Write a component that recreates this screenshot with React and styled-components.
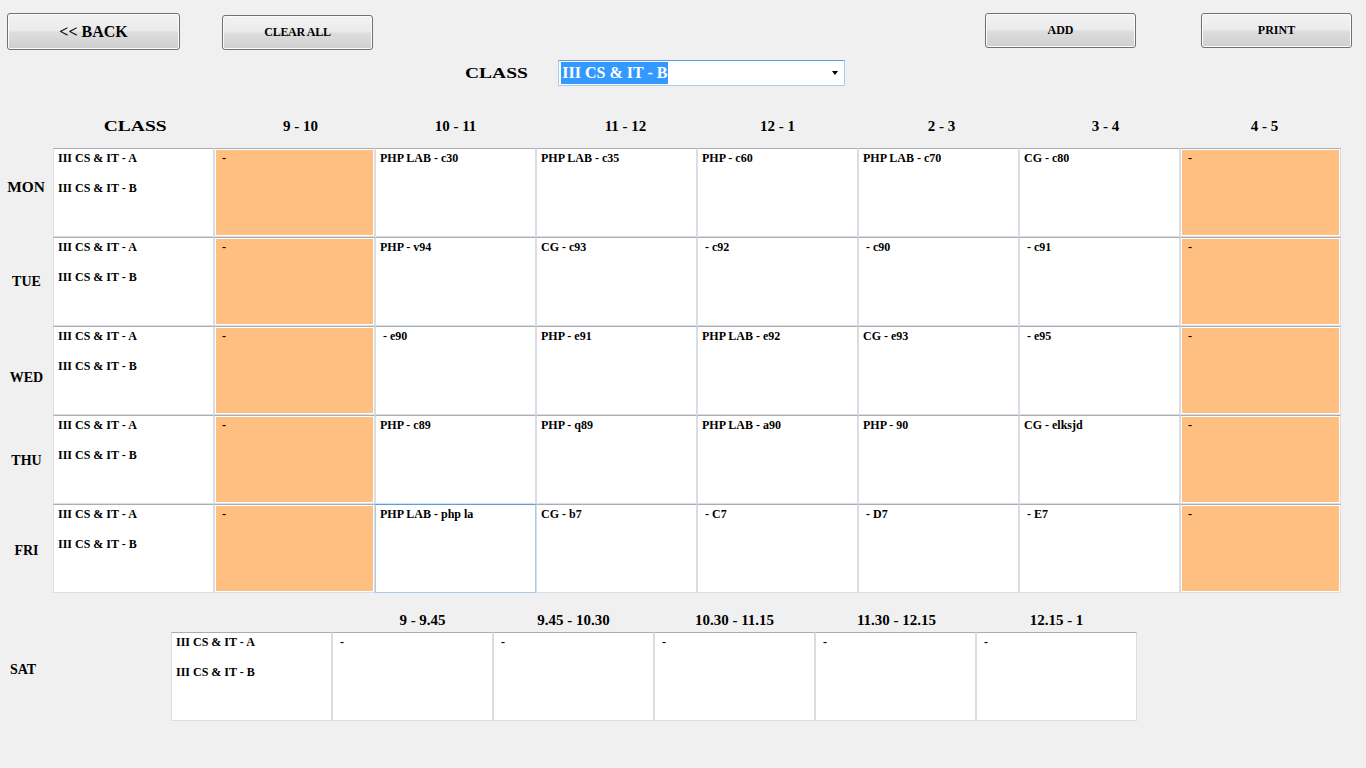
import React from "react";
import styled, { createGlobalStyle } from "styled-components";

const GlobalStyle = createGlobalStyle`
  html, body {
    margin: 0;
    padding: 0;
    background: #f0f0f0;
  }
  body {
    font-family: "Liberation Serif", "Times New Roman", serif;
    color: #000;
  }
`;

const Page = styled.div`
  width: 1366px;
  height: 768px;
  padding-top: 13px;
  box-sizing: border-box;
  overflow: hidden;
`;

const Toolbar = styled.div`
  display: flex;
  align-items: flex-start;
  height: 37px;
  padding: 0 14px 0 7px;
`;

const Spacer = styled.div`
  flex: 1;
`;

const Button = styled.button`
  width: ${p => p.$w || 151}px;
  height: ${p => p.$h || 35}px;
  margin-top: ${p => p.$top || 0}px;
  margin-left: ${p => p.$ml || 0}px;
  padding: 0;
  border: 1px solid #707070;
  border-radius: 3px;
  background: linear-gradient(#f2f2f2 0%, #ebebeb 48%, #dddddd 52%, #cfcfcf 100%);
  box-shadow: inset 0 0 0 1px #fbfbfb;
  font-family: "Liberation Serif", "Times New Roman", serif;
  font-weight: bold;
  font-size: ${p => p.$fs || 12}px;
  letter-spacing: ${p => p.$ls || 0}px;
  color: #000;
  cursor: pointer;
`;

const ClassRow = styled.div`
  display: flex;
  align-items: center;
  height: 26px;
  margin-top: 10px;
  padding-left: 465px;
`;

const Wide = styled.span`
  display: inline-block;
  font-weight: bold;
  font-size: ${p => p.$fs || 15}px;
  letter-spacing: ${p => p.$ls || 0}px;
  transform: scaleX(${p => p.$sx || 1});
  transform-origin: ${p => p.$origin || "center"};
`;

const FakeSelect = styled.div`
  position: relative;
  margin-left: 45px;
  width: 287px;
  height: 26px;
  box-sizing: border-box;
  border: 1px solid #a9cdee;
  border-top-color: #5b9fe2;
  background: #fff;
  display: flex;
  align-items: center;
  padding-left: 2px;
`;

const Picked = styled.span`
  background: #3399ff;
  color: #fff;
  font-weight: bold;
  font-size: 16px;
  line-height: 22px;
  padding: 0 1px;
`;

const Caret = styled.span`
  position: absolute;
  right: 6px;
  top: 10px;
  width: 0;
  height: 0;
  border-left: 3.5px solid transparent;
  border-right: 3.5px solid transparent;
  border-top: 4px solid #000;
`;

const Grid = styled.div`
  display: grid;
  grid-template-columns: ${p => p.$first}px repeat(${p => p.$count}, 161px);
  margin-top: ${p => p.$top || 0}px;
`;

const HeadCell = styled.div`
  height: ${p => p.$h}px;
  display: flex;
  align-items: flex-end;
  justify-content: center;
  padding-bottom: ${p => p.$pb}px;
  padding-left: ${p => p.$nudge || 0}px;
  box-sizing: border-box;
  font-weight: bold;
  font-size: 15px;
  line-height: 16px;
  white-space: pre;
`;

const DayCell = styled.div`
  height: 89px;
  display: flex;
  align-items: center;
  justify-content: ${p => (p.$left ? "flex-start" : "center")};
  padding-left: ${p => (p.$left ? 10 : 0)}px;
  padding-top: ${p => Math.max(p.$shift || 0, 0) * 2}px;
  padding-bottom: ${p => Math.max(-(p.$shift || 0), 0) * 2}px;
  box-sizing: border-box;
  font-weight: bold;
  font-size: 14px;
`;

const Cell = styled.div`
  height: 89px;
  box-sizing: border-box;
  border: 1px solid ${p => (p.$focus ? "#a8cbed" : "#dadde4")};
  border-top-color: ${p => (p.$focus ? "#5b9fe2" : "#abadb3")};
  background: ${p => (p.$free ? "#ffbf80" : "#fff")};
  box-shadow: inset 0 0 0 1px #fff;
  padding: 2px 4px;
  font-weight: bold;
  font-size: 12px;
  line-height: 15px;
  white-space: pre;
  overflow: hidden;
`;

const TIMES = [
  { t: "9 - 10", n: 12 },
  { t: "10 - 11", n: -6 },
  { t: "11 - 12", n: 18 },
  { t: "12 - 1", n: -8 },
  { t: "2 - 3", n: 6 },
  { t: "3 - 4", n: 12 },
  { t: "4 - 5", n: 8 },
];
const SAT_TIMES = [
  { t: "9 - 9.45", n: 20 },
  { t: "9.45 - 10.30", n: -4 },
  { t: "10.30 - 11.15", n: -2 },
  { t: "11.30 - 12.15", n: 2 },
  { t: "12.15 - 1", n: -14 },
];
const CLASSES = "III CS & IT - A\n\nIII CS & IT - B";

const WEEK = [
  { day: "MON", wide: true, shift: -5, slots: ["PHP LAB - c30", "PHP LAB - c35", "PHP - c60", "PHP LAB - c70", "CG - c80"] },
  { day: "TUE", shift: 0, slots: ["PHP - v94", "CG - c93", " - c92", " - c90", " - c91"] },
  { day: "WED", shift: 7, slots: [" - e90", "PHP - e91", "PHP LAB - e92", "CG - e93", " - e95"] },
  { day: "THU", shift: 1, slots: ["PHP - c89", "PHP - q89", "PHP LAB - a90", "PHP - 90", "CG - elksjd"] },
  { day: "FRI", shift: 2, slots: ["PHP LAB - php la", "CG - b7", " - C7", " - D7", " - E7"], focus: 0 },
];

export default function App() {
  return (
    <Page>
      <GlobalStyle />
      <Toolbar>
        <Button $w={173} $h={37} $fs={16}>&lt;&lt; BACK</Button>
        <Button $ml={42} $top={2} $ls={-0.3}>CLEAR ALL</Button>
        <Spacer />
        <Button>ADD</Button>
        <Button $ml={65}>PRINT</Button>
      </Toolbar>

      <ClassRow>
        <Wide $sx={1.3} $origin="left">CLASS</Wide>
        <FakeSelect>
          <Picked>III CS &amp; IT - B</Picked>
          <Caret />
        </FakeSelect>
      </ClassRow>

      <Grid $first={53} $count={8} $top={26}>
        <HeadCell $h={36} $pb={14} />
        <HeadCell $h={36} $pb={14} $nudge={4}>
          <Wide $sx={1.3}>CLASS</Wide>
        </HeadCell>
        {TIMES.map(({ t, n }) => (
          <HeadCell key={t} $h={36} $pb={14} $nudge={n}>{t}</HeadCell>
        ))}

        {WEEK.map(row => (
          <React.Fragment key={row.day}>
            <DayCell $shift={row.shift}>
              {row.wide ? <Wide $sx={1.1} $fs={14}>{row.day}</Wide> : row.day}
            </DayCell>
            <Cell>{CLASSES}</Cell>
            <Cell $free>{" -"}</Cell>
            {row.slots.map((s, i) => (
              <Cell key={i} $focus={row.focus === i}>{s}</Cell>
            ))}
            <Cell $free>{" -"}</Cell>
          </React.Fragment>
        ))}
      </Grid>

      <Grid $first={171} $count={6}>
        <HeadCell $h={39} $pb={4} />
        <HeadCell $h={39} $pb={4} />
        {SAT_TIMES.map(({ t, n }) => (
          <HeadCell key={t} $h={39} $pb={4} $nudge={n}>{t}</HeadCell>
        ))}

        <DayCell $left $shift={-7}>SAT</DayCell>
        <Cell>{CLASSES}</Cell>
        {SAT_TIMES.map(({ t }) => (
          <Cell key={t}>{" -"}</Cell>
        ))}
      </Grid>
    </Page>
  );
}
